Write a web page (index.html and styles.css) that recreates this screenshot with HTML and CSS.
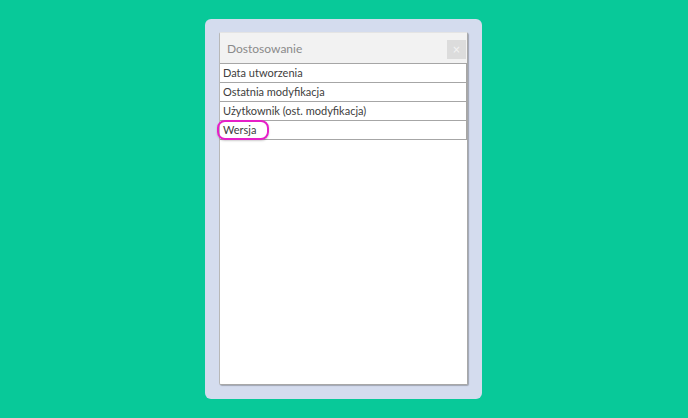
FILE: index.html
```html
<!DOCTYPE html>
<html lang="pl">
<head>
    <meta charset="UTF-8">
    <title>Dostosowanie</title>
    <link rel="stylesheet" href="styles.css">
</head>
<body>
    <div class="panel">
        <div class="dialog">
            <div class="dialog-header">
                <span class="dialog-title">Dostosowanie</span>
                <button class="close-btn">&times;</button>
            </div>
            <ul class="field-list">
                <li class="field">Data utworzenia</li>
                <li class="field">Ostatnia modyfikacja</li>
                <li class="field">Użytkownik (ost. modyfikacja)</li>
                <li class="field"><span class="marked">Wersja</span></li>
            </ul>
        </div>
    </div>
</body>
</html>
```

FILE: styles.css
```css
html, body {
    margin: 0;
    height: 100%;
}

body {
    background-color: #08c999;
    font-family: Lato, 'Open Sans', sans-serif;
    display: flex;
    justify-content: center;
    align-items: flex-start;
    padding-right: 1px;
}

/* Outer light panel */
.panel {
    box-sizing: border-box;
    width: 277px;
    height: 380px;
    margin-top: 19px;
    padding: 13px 14px 14px 14px;
    background-color: #d4dcee;
    border-radius: 6px;
}

/* Dialog */
.dialog {
    box-sizing: border-box;
    height: 100%;
    display: flex;
    flex-direction: column;
    background-color: #fff;
    border: 1px solid #a8a8a8;
    border-top-color: #e4e4e4;
    border-left-color: #b8b8b8;
    border-radius: 2px;
    box-shadow: 1px 1px 1px rgba(0, 0, 0, 0.25);
}

.dialog-header {
    height: 30px;
    display: flex;
    align-items: center;
    justify-content: space-between;
    padding: 0 1px 0 7px;
    background-color: #f2f2f2;
    border-bottom: 1px solid #a6a6a6;
}

.dialog-title {
    font-size: 12px;
    color: #8a8a8a;
}

.close-btn {
    width: 19px;
    height: 19px;
    padding: 0;
    border: none;
    background-color: #dcdcdc;
    color: #f4f4f4;
    font-family: 'DejaVu Sans', sans-serif;
    font-size: 10px;
    line-height: 19px;
    margin-top: 3px;
}

/* Field list */
.field-list {
    list-style: none;
    margin: 0;
    padding: 0;
}

.field {
    height: 18px;
    line-height: 18px;
    padding-left: 3px;
    font-size: 11px;
    color: #404040;
    border-bottom: 1px solid #a6a6a6;
    border-right: 1px solid #a6a6a6;
}

.marked {
    position: relative;
    display: inline-block;
}

/* Magenta highlight over "Wersja" */
.marked::after {
    content: "";
    position: absolute;
    left: -6px;
    top: -1px;
    width: 52px;
    height: 20px;
    box-sizing: border-box;
    border: 2px solid #e61fc8;
    border-radius: 8px;
    box-shadow: 0 1px 2px rgba(0, 0, 0, 0.2);
}
```
